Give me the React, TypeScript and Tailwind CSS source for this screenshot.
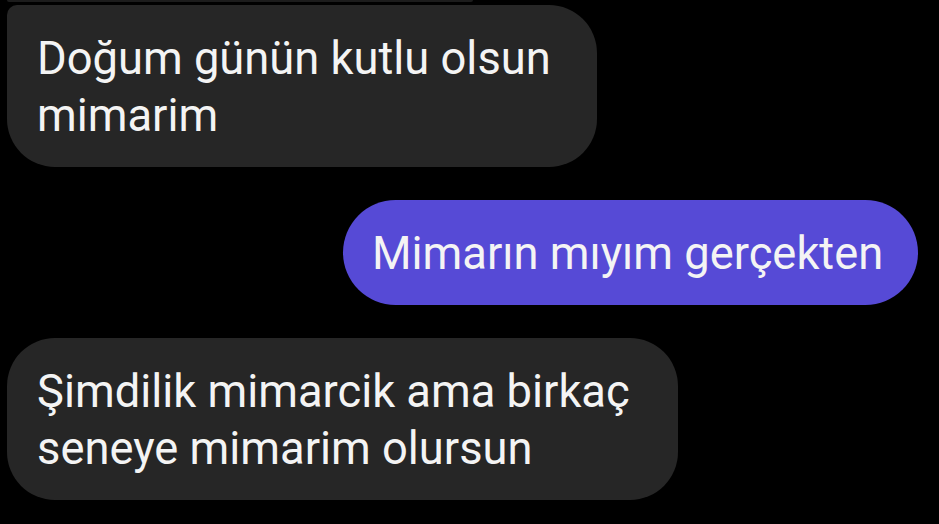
export default function App() {
  return (
    <div className="h-[524px] w-[939px] overflow-hidden bg-black font-['Roboto',sans-serif] text-[45.3px] leading-[57px] text-[#f4f4f4]">
      <div className="flex flex-col gap-[33px] px-[7px] pt-[5px]">
        {/* end of the previous message, cut off at the top */}
        <div className="-mt-[5px] -mb-[33px] h-[2px] w-[466px] rounded-b-[2px] bg-[#1c1c1c]" />

        <div className="mt-[3px] w-[590px] rounded-[48px] rounded-tl-[10px] bg-[#262626] pt-[25px] pb-[23px] pl-[30px]">
          Doğum günün kutlu olsun
          <br />
          mimarim
        </div>

        <div className="mr-[14px] ml-auto w-[575px] rounded-full bg-[#564ad6] pt-[25px] pb-[23px] pl-[29px] whitespace-nowrap">
          Mimarın mıyım gerçekten
        </div>

        <div className="w-[671px] rounded-[48px] bg-[#262626] pt-[25px] pb-[23px] pl-[30px]">
          Şimdilik mimarcik ama birkaç
          <br />
          seneye mimarim olursun
        </div>
      </div>
    </div>
  );
}
